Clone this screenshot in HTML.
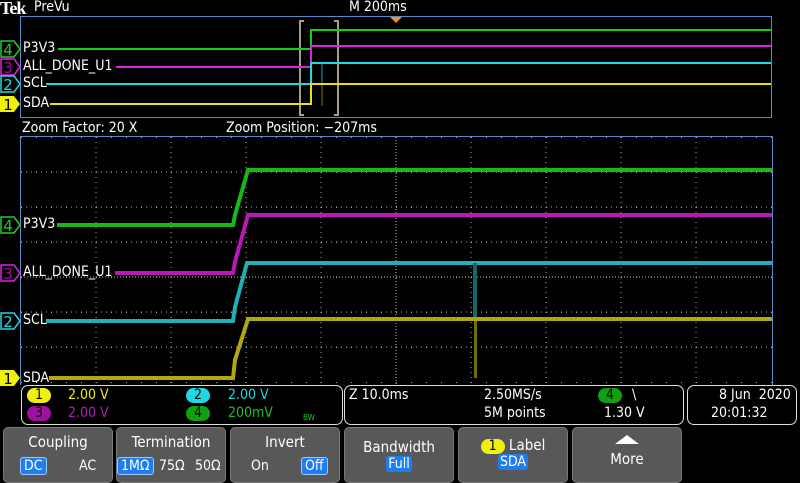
<!DOCTYPE html>
<html><head><meta charset="utf-8"><style>
body{margin:0;background:#000;width:800px;height:480px;overflow:hidden;position:relative;font-family:"DejaVu Sans Condensed","DejaVu Sans","Liberation Sans",sans-serif;color:#fff}
.t{position:absolute;white-space:nowrap;font-size:14px;line-height:15px}
.box{position:absolute;border:1px solid #ddd;border-radius:7px}
.btn{position:absolute;top:427px;height:56px;width:110px;background:#585858;border:1px solid #7a7a7a;border-radius:5px;box-sizing:border-box;text-align:center;font-size:15px}
.sel{background:#1e7ef0;border:1px solid #9cc8ff;border-radius:3px;padding:0 3px}
.pill{display:inline-block;border-radius:9px;width:24px;height:15px;line-height:15px;text-align:center;color:#000;font-size:14px}
</style></head><body>
<div class="t" style="left:0;top:-1px;font-family:'Liberation Serif',serif;font-weight:bold;font-size:18px;line-height:18px;letter-spacing:-1px">Tek</div>
<div class="t" style="left:34px;top:0">PreVu</div>
<div class="t" style="left:349px;top:0">M 200ms</div>
<div class="t" style="left:22px;top:121px">Zoom Factor: 20 X</div>
<div class="t" style="left:226px;top:121px">Zoom Position: −207ms</div>
<svg width="800" height="480" style="position:absolute;left:0;top:0">
<defs><pattern id="dots" x="21" y="137" width="15" height="35" patternUnits="userSpaceOnUse"><rect x="0" y="0" width="1" height="1" fill="#b8a888"/></pattern></defs>
<rect x="20.5" y="16.5" width="751" height="101" fill="none" stroke="#5a8ac8"/>
<polygon points="390,17 402,17 396,23" fill="#f09020"/>
<path d="M304,21h-4v94h4 M334,21h4v94h-4" stroke="#a89c84" stroke-width="2" fill="none"/>
<path d="M58,49H311V30H771" stroke="#10d010" stroke-width="2" fill="none"/>
<path d="M116,67H311V46H771" stroke="#e020e0" stroke-width="2" fill="none"/>
<path d="M46,84H311V63H771" stroke="#20d8e0" stroke-width="2" fill="none"/>
<path d="M322,63V106" stroke="#20a0a0" stroke-width="1"/>
<path d="M322,84V106" stroke="#808000" stroke-width="1"/>
<path d="M50,104H311V84H771" stroke="#e8e010" stroke-width="2" fill="none"/>
<rect x="21" y="137" width="751" height="248" fill="url(#dots)"/>
<g stroke="#b8a888" stroke-dasharray="1 4">
<path d="M96,137V385M171,137V385M246,137V385M321,137V385M471,137V385M546,137V385M621,137V385M696,137V385"/>
<path d="M21,172H772M21,207H772M21,242H772M21,312H772M21,347H772"/>
</g>
<g stroke="#c8b898" stroke-dasharray="1 2"><path d="M396,137V385M21,277H772"/></g>
<path d="M21,136.5H772.5V385" stroke="#5a8ac8" fill="none"/>
<path d="M20.5,136V385" stroke="#5a8ac8"/>
<path d="M57,225H233L235,215L248,170H772" stroke="#18b818" stroke-width="4" fill="none"/>
<path d="M115,273H233L235,262L248,215H772" stroke="#b818b8" stroke-width="4" fill="none"/>
<path d="M46,321H233L235,307L247,263H772" stroke="#20b0b8" stroke-width="4" fill="none"/>
<rect x="473" y="263" width="4" height="57" fill="#106868"/>
<rect x="474" y="320" width="3" height="58" fill="#707000"/>
<path d="M49,378H233L235,360L248,319H772" stroke="#b0a810" stroke-width="4" fill="none"/>
<g font-size="15" font-family="DejaVu Sans" text-anchor="middle">
<path d="M1,41H14L20,49L14,57H1Z" fill="#000" stroke="#20d020" stroke-width="1.5"/><text x="8" y="55" fill="#20d020">4</text>
<path d="M1,59H14L20,67L14,75H1Z" fill="#000" stroke="#e020e0" stroke-width="1.5"/><text x="8" y="73" fill="#a010a0">3</text>
<path d="M1,76H14L20,84L14,92H1Z" fill="#000" stroke="#20d8e0" stroke-width="1.5"/><text x="8" y="90" fill="#20d8e0">2</text>
<path d="M0,96H14L20,104L14,112H0Z" fill="#f0f010"/><text x="8" y="110" fill="#000">1</text>
<path d="M1,217H14L20,225L14,233H1Z" fill="#000" stroke="#20d020" stroke-width="1.5"/><text x="8" y="231" fill="#20d020">4</text>
<path d="M1,265H14L20,273L14,281H1Z" fill="#000" stroke="#e020e0" stroke-width="1.5"/><text x="8" y="279" fill="#a010a0">3</text>
<path d="M1,313H14L20,321L14,329H1Z" fill="#000" stroke="#20d8e0" stroke-width="1.5"/><text x="8" y="327" fill="#20d8e0">2</text>
<path d="M0,370H14L20,378L14,386H0Z" fill="#f0f010"/><text x="8" y="384" fill="#000">1</text>
</g>
</svg>
<div class="t" style="left:23px;top:41px">P3V3</div>
<div class="t" style="left:23px;top:59px">ALL_DONE_U1</div>
<div class="t" style="left:23px;top:76px">SCL</div>
<div class="t" style="left:23px;top:96px">SDA</div>
<div class="t" style="left:23px;top:217px">P3V3</div>
<div class="t" style="left:23px;top:265px">ALL_DONE_U1</div>
<div class="t" style="left:23px;top:313px">SCL</div>
<div class="t" style="left:23px;top:371px">SDA</div>
<div class="box" style="left:21px;top:385px;width:320px;height:38px;background:#000"></div>
<div class="box" style="left:344px;top:385px;width:338px;height:38px;background:#000"></div>
<div class="box" style="left:687px;top:385px;width:108px;height:38px;background:#000"></div>
<div class="t" style="left:27px;top:388px"><span class="pill" style="background:#f0f010">1</span></div>
<div class="t" style="left:68px;top:388px;color:#f0f010">2.00 V</div>
<div class="t" style="left:186px;top:388px"><span class="pill" style="background:#20d8e0">2</span></div>
<div class="t" style="left:228px;top:388px;color:#20d8e0">2.00 V</div>
<div class="t" style="left:27px;top:406px"><span class="pill" style="background:#a010a0">3</span></div>
<div class="t" style="left:68px;top:406px;color:#b020b0">2.00 V</div>
<div class="t" style="left:186px;top:406px"><span class="pill" style="background:#10a010">4</span></div>
<div class="t" style="left:228px;top:406px;color:#20c020">200mV</div>
<div class="t" style="left:303px;top:410px;color:#20c020;font-size:8px">BW</div>
<div class="t" style="left:349px;top:388px">Z 10.0ms</div>
<div class="t" style="left:484px;top:388px">2.50MS/s</div>
<div class="t" style="left:484px;top:406px">5M points</div>
<div class="t" style="left:598px;top:388px"><span class="pill" style="background:#10a010">4</span></div>
<div class="t" style="left:632px;top:388px">\</div>
<div class="t" style="left:604px;top:406px">1.30 V</div>
<div class="t" style="left:719px;top:388px">8 Jun &nbsp;2020</div>
<div class="t" style="left:711px;top:406px">20:01:32</div>
<div class="btn" style="left:3px"><div style="margin-top:5px">Coupling</div><div style="font-size:14px"><span class="sel" style="position:absolute;left:16px;top:29px">DC</span><span style="position:absolute;left:75px;top:30px">AC</span></div></div>
<div class="btn" style="left:116px"><div style="margin-top:5px">Termination</div><div style="font-size:14px"><span class="sel" style="position:absolute;left:0;top:29px">1MΩ</span><span style="position:absolute;left:42px;top:30px">75Ω</span><span style="position:absolute;left:78px;top:30px">50Ω</span></div></div>
<div class="btn" style="left:230px"><div style="margin-top:5px">Invert</div><div style="font-size:14px"><span style="position:absolute;left:20px;top:30px">On</span><span class="sel" style="position:absolute;left:70px;top:29px">Off</span></div></div>
<div class="btn" style="left:344px"><div style="margin-top:10px">Bandwidth</div><div style="font-size:14px"><span class="sel" style="border:none;padding:0 2px">Full</span></div></div>
<div class="btn" style="left:458px"><div style="margin-top:8px"><span class="pill" style="background:#f0f010">1</span> Label</div><div style="font-size:14px"><span class="sel" style="border:none;padding:0 2px">SDA</span></div></div>
<div class="btn" style="left:572px"><svg width="30" height="12" style="margin-top:6px"><polygon points="15,1 27,10 3,10" fill="#fff"/></svg><div>More</div></div>
</body></html>
